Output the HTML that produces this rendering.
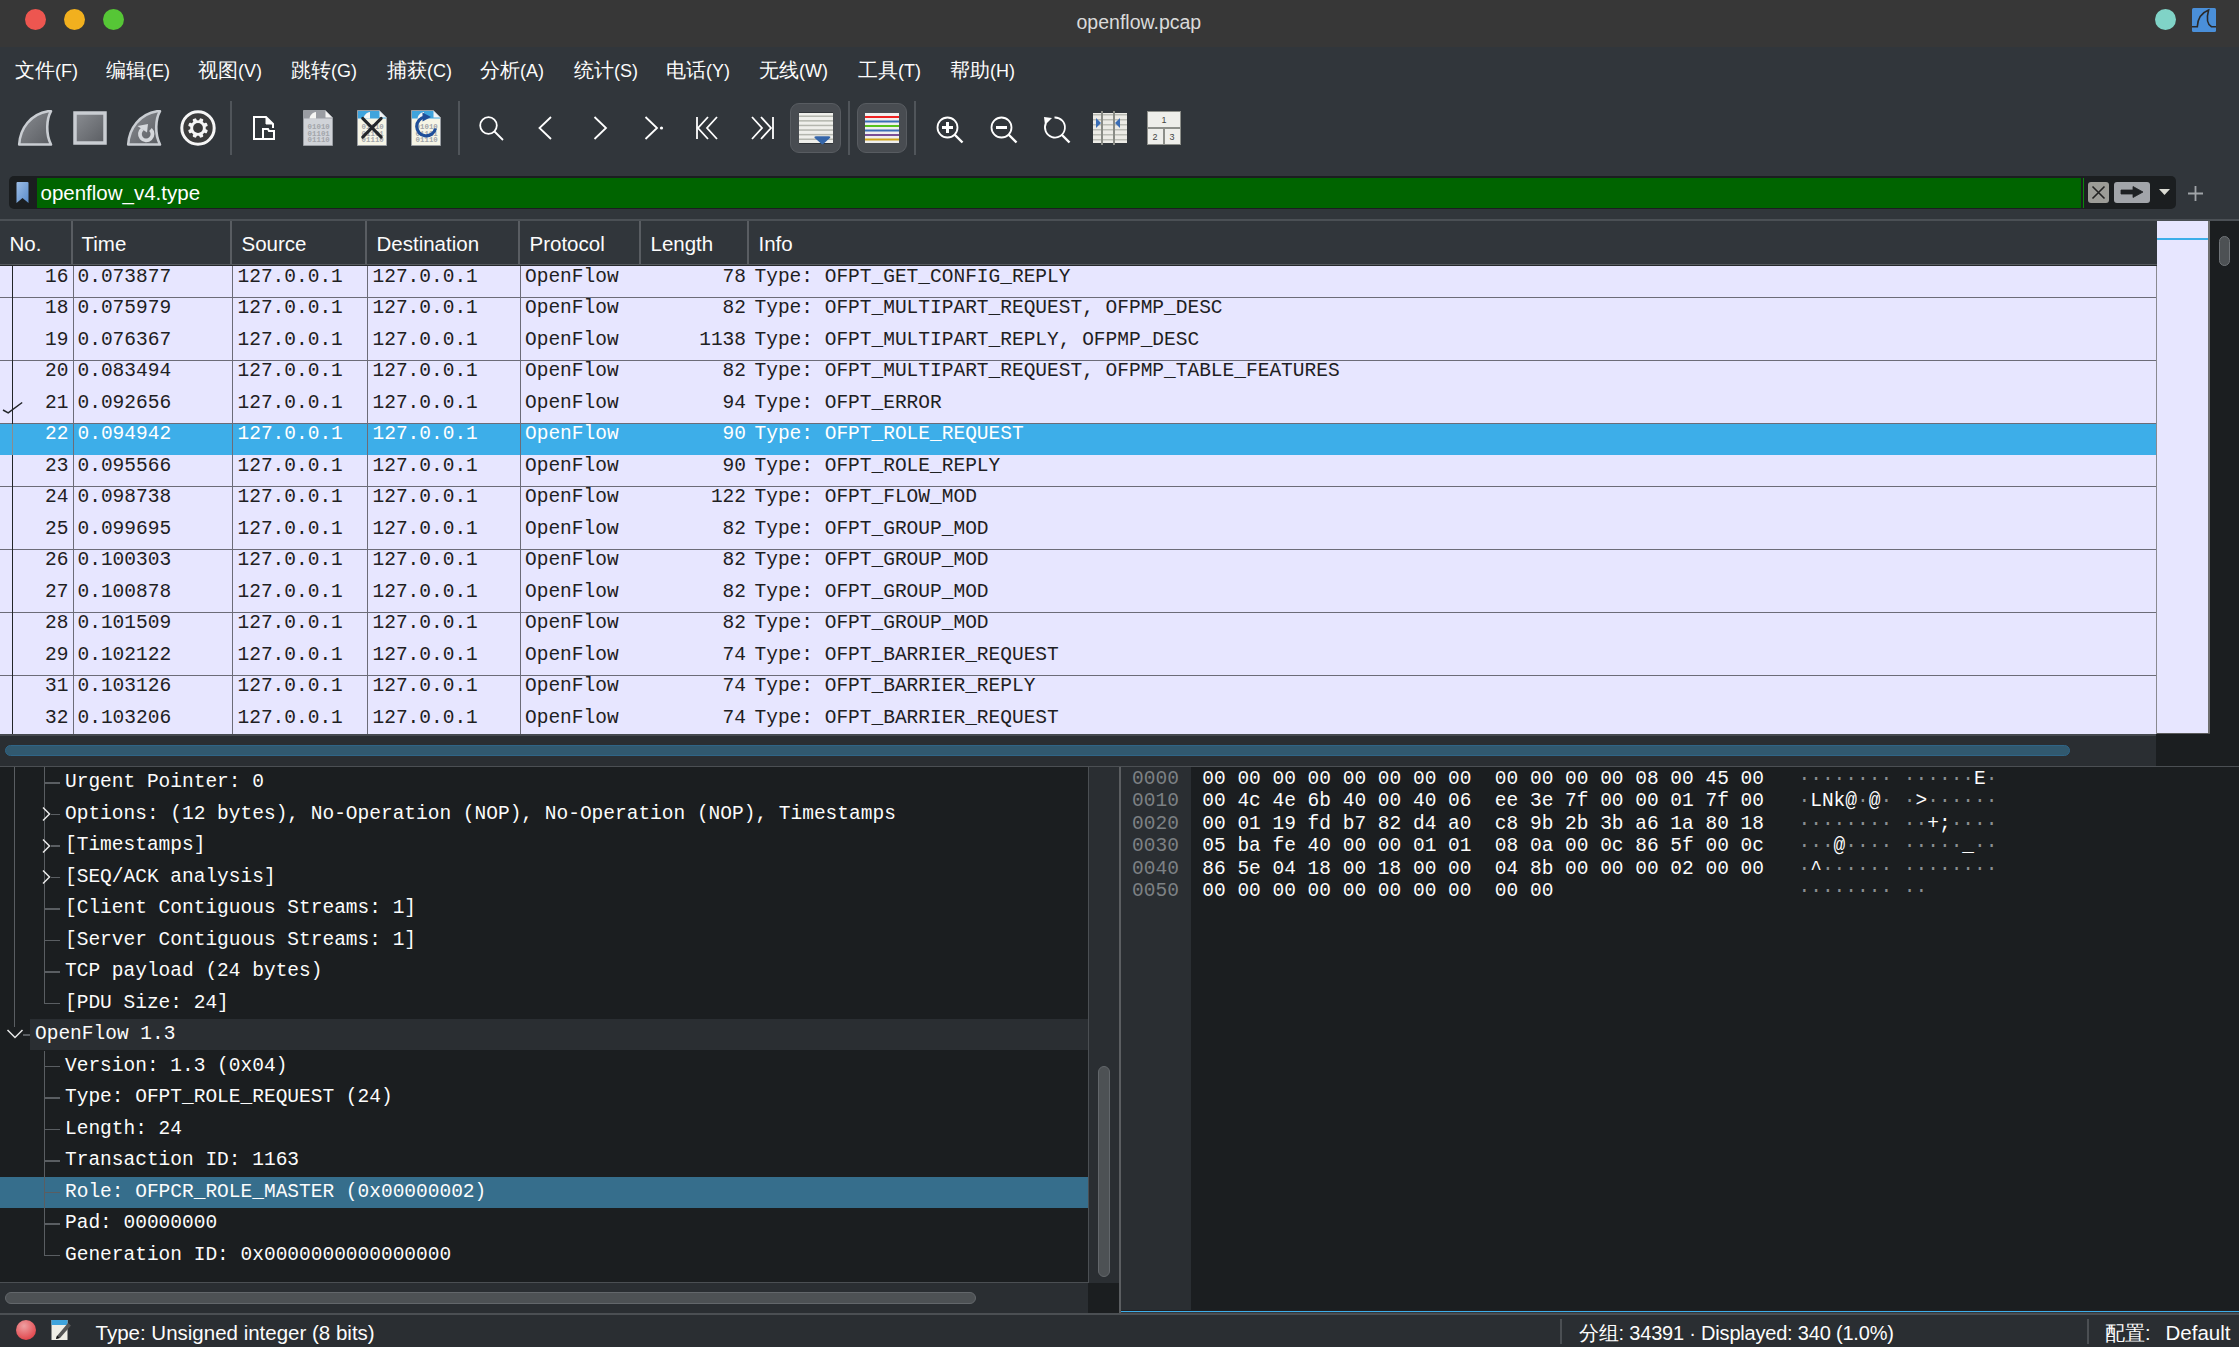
<!DOCTYPE html>
<html><head><meta charset="utf-8"><title>openflow.pcap</title>
<style>
html,body{margin:0;padding:0;width:2239px;height:1347px;overflow:hidden;background:#31363b;}
body>div,body>svg,body>div>div,body>div>svg{position:absolute;}
body{font-family:'Liberation Sans',sans-serif;}
</style></head><body>
<div style="left:0px;top:0px;width:2239px;height:47px;background:#373737;"></div>
<div style="left:25.200000000000003px;top:9.2px;width:21px;height:21px;border-radius:50%;background:#ed5650"></div>
<div style="left:64.2px;top:9.2px;width:21px;height:21px;border-radius:50%;background:#f2b01e"></div>
<div style="left:103.2px;top:9.2px;width:21px;height:21px;border-radius:50%;background:#56c636"></div>
<div style="left:1076.5px;top:10.6px;font:19.5px/22px 'Liberation Sans', sans-serif;color:#dadada;white-space:pre;">openflow.pcap</div>
<div style="left:2154.6px;top:9.4px;width:21px;height:21px;border-radius:50%;background:#80d3c7"></div>
<svg style="left:2192px;top:8px" width="24" height="24" viewBox="0 0 24 24"><rect x="0" y="0" width="24" height="24" rx="1.5" fill="#4a8fd9"/><path d="M0 18.8 H5.3 C5.6 10 9 5 16.6 2 C15 8 14.5 16 19.5 18.8 H24" fill="none" stroke="#2a2a2a" stroke-width="1.6"/></svg>
<div style="left:0px;top:47px;width:2239px;height:52px;background:#31363b;"></div>
<div style="left:15px;top:60.3px;font:20px/20px 'Liberation Sans', sans-serif;color:#fcfcfc;white-space:pre">文件<span style="font-size:18px">(F)</span></div>
<div style="left:106px;top:60.3px;font:20px/20px 'Liberation Sans', sans-serif;color:#fcfcfc;white-space:pre">编辑<span style="font-size:18px">(E)</span></div>
<div style="left:198px;top:60.3px;font:20px/20px 'Liberation Sans', sans-serif;color:#fcfcfc;white-space:pre">视图<span style="font-size:18px">(V)</span></div>
<div style="left:291px;top:60.3px;font:20px/20px 'Liberation Sans', sans-serif;color:#fcfcfc;white-space:pre">跳转<span style="font-size:18px">(G)</span></div>
<div style="left:387px;top:60.3px;font:20px/20px 'Liberation Sans', sans-serif;color:#fcfcfc;white-space:pre">捕获<span style="font-size:18px">(C)</span></div>
<div style="left:480px;top:60.3px;font:20px/20px 'Liberation Sans', sans-serif;color:#fcfcfc;white-space:pre">分析<span style="font-size:18px">(A)</span></div>
<div style="left:574px;top:60.3px;font:20px/20px 'Liberation Sans', sans-serif;color:#fcfcfc;white-space:pre">统计<span style="font-size:18px">(S)</span></div>
<div style="left:666px;top:60.3px;font:20px/20px 'Liberation Sans', sans-serif;color:#fcfcfc;white-space:pre">电话<span style="font-size:18px">(Y)</span></div>
<div style="left:759px;top:60.3px;font:20px/20px 'Liberation Sans', sans-serif;color:#fcfcfc;white-space:pre">无线<span style="font-size:18px">(W)</span></div>
<div style="left:858px;top:60.3px;font:20px/20px 'Liberation Sans', sans-serif;color:#fcfcfc;white-space:pre">工具<span style="font-size:18px">(T)</span></div>
<div style="left:950px;top:60.3px;font:20px/20px 'Liberation Sans', sans-serif;color:#fcfcfc;white-space:pre">帮助<span style="font-size:18px">(H)</span></div>
<div style="left:0px;top:99px;width:2239px;height:66px;background:#31363b;"></div>
<div style="left:790px;top:102.5px;width:51px;height:50.5px;border-radius:9px;background:#484c51;box-sizing:border-box;border:1.5px solid #585c61"></div>
<div style="left:857px;top:102.5px;width:50px;height:50.5px;border-radius:9px;background:#484c51;box-sizing:border-box;border:1.5px solid #585c61"></div>
<div style="left:230px;top:101px;width:2px;height:54px;background:#50555a;"></div>
<div style="left:458px;top:101px;width:2px;height:54px;background:#50555a;"></div>
<div style="left:848px;top:101px;width:2px;height:54px;background:#50555a;"></div>
<div style="left:914px;top:101px;width:2px;height:54px;background:#50555a;"></div>
<svg style="left:18px;top:110px;overflow:visible" width="35" height="36" viewBox="0 0 35 36"><defs><linearGradient id="gfin" x1="0" y1="0" x2="1" y2="1"><stop offset="0" stop-color="#8a8d92"/><stop offset="1" stop-color="#5a5d62"/></linearGradient></defs><path d="M1.2 34.5 C2 18 13 4 30 1.2 H33 C28.5 9 27.5 24 33 34.5 Z" fill="url(#gfin)" stroke="#c9cdd2" stroke-width="2.6" stroke-linejoin="round"/></svg>
<svg style="left:73px;top:111px;overflow:visible" width="34" height="34" viewBox="0 0 34 34"><rect x="2" y="2" width="30" height="30" fill="url(#gfin)" stroke="#c9cdd2" stroke-width="3.5"/></svg>
<svg style="left:127px;top:110px;overflow:visible" width="35" height="36" viewBox="0 0 35 36"><path d="M1.2 34.5 C2 18 13 4 30 1.2 H33 C28.5 9 27.5 24 33 34.5 Z" fill="url(#gfin)" stroke="#c9cdd2" stroke-width="2.6" stroke-linejoin="round"/><path d="M23.5 19.5 A6.3 6.3 0 1 1 15.5 19" fill="none" stroke="#d5d8dc" stroke-width="3.8"/><path d="M10.5 16 L21 14 L20 22.5 Z" fill="#d5d8dc"/></svg>
<svg style="left:180px;top:110px;overflow:visible" width="36" height="36" viewBox="0 0 36 36"><circle cx="18" cy="18" r="16.2" fill="#3c3c3c" stroke="#f6f6f6" stroke-width="3"/><g fill="#f6f6f6" transform="translate(18 18) rotate(22.5)"><rect x="-1.9" y="-10" width="3.8" height="4" rx="1" transform="rotate(0)"/><rect x="-1.9" y="-10" width="3.8" height="4" rx="1" transform="rotate(45)"/><rect x="-1.9" y="-10" width="3.8" height="4" rx="1" transform="rotate(90)"/><rect x="-1.9" y="-10" width="3.8" height="4" rx="1" transform="rotate(135)"/><rect x="-1.9" y="-10" width="3.8" height="4" rx="1" transform="rotate(180)"/><rect x="-1.9" y="-10" width="3.8" height="4" rx="1" transform="rotate(225)"/><rect x="-1.9" y="-10" width="3.8" height="4" rx="1" transform="rotate(270)"/><rect x="-1.9" y="-10" width="3.8" height="4" rx="1" transform="rotate(315)"/><circle r="7.8"/></g><circle cx="18" cy="18" r="4.9" fill="#3a3a3a"/></svg>
<svg style="left:253px;top:116px;overflow:visible" width="22" height="24" viewBox="0 0 22 24"><path d="M12 23 H1 V1 H13 L20 8 V12" fill="none" stroke="#fff" stroke-width="2"/><path d="M13 1 V8 H20" fill="#fff" stroke="#fff" stroke-width="1"/><path d="M10 13 H15 L16 15 H21 V23 H10 Z" fill="none" stroke="#fff" stroke-width="2"/></svg>
<svg style="left:303px;top:110px;overflow:visible" width="30" height="36" viewBox="0 0 30 36"><path d="M0.5 0.5 H22.5 L29.5 7.5 V35.5 H0.5 Z" fill="#d0d3d8" stroke="#9a9ea3" stroke-width="1"/><path d="M1 1 H22.3 L29 7.7 V8.6 H1 Z" fill="#9a9da3"/><path d="M22.5 1 V7.5 H29 Z" fill="#f4f4f4"/><path d="M6.5 8.6 C7 5 9.5 2.5 13 2 V8.6 Z" fill="#f6f6f4"/><text x="4.6" y="18.7" font-family="Liberation Mono" font-weight="bold" font-size="7.4" fill="#a2a5aa">01010</text><text x="4.6" y="25.5" font-family="Liberation Mono" font-weight="bold" font-size="7.4" fill="#a2a5aa">01101</text><text x="4.6" y="32.3" font-family="Liberation Mono" font-weight="bold" font-size="7.4" fill="#a2a5aa">01110</text></svg>
<svg style="left:357px;top:110px;overflow:visible" width="30" height="36" viewBox="0 0 30 36"><path d="M0.5 0.5 H22.5 L29.5 7.5 V35.5 H0.5 Z" fill="#f6f5e6" stroke="#9a9ea3" stroke-width="1"/><path d="M1 1 H22.3 L29 7.7 V8.6 H1 Z" fill="#3fa4dd"/><path d="M22.5 1 V7.5 H29 Z" fill="#f4f4f4"/><path d="M6.5 8.6 C7 5 9.5 2.5 13 2 V8.6 Z" fill="#f6f6f4"/><text x="4.6" y="18.7" font-family="Liberation Mono" font-weight="bold" font-size="7.4" fill="#a2a5aa">01010</text><text x="4.6" y="25.5" font-family="Liberation Mono" font-weight="bold" font-size="7.4" fill="#a2a5aa">01101</text><text x="4.6" y="32.3" font-family="Liberation Mono" font-weight="bold" font-size="7.4" fill="#a2a5aa">01110</text><path d="M5.7 8.4 L24.2 27.1 M24.2 8.4 L5.7 27.1" stroke="#23262a" stroke-width="3" stroke-linecap="round"/></svg>
<svg style="left:411px;top:110px;overflow:visible" width="30" height="36" viewBox="0 0 30 36"><path d="M0.5 0.5 H22.5 L29.5 7.5 V35.5 H0.5 Z" fill="#f6f5e6" stroke="#9a9ea3" stroke-width="1"/><path d="M1 1 H22.3 L29 7.7 V8.6 H1 Z" fill="#3fa4dd"/><path d="M22.5 1 V7.5 H29 Z" fill="#f4f4f4"/><path d="M6.5 8.6 C7 5 9.5 2.5 13 2 V8.6 Z" fill="#f6f6f4"/><text x="4.6" y="18.7" font-family="Liberation Mono" font-weight="bold" font-size="7.4" fill="#a2a5aa">01010</text><text x="4.6" y="25.5" font-family="Liberation Mono" font-weight="bold" font-size="7.4" fill="#a2a5aa">01101</text><text x="4.6" y="32.3" font-family="Liberation Mono" font-weight="bold" font-size="7.4" fill="#a2a5aa">01110</text><path d="M14 7 A9.5 9.5 0 1 0 24.5 18.5" fill="none" stroke="#1f4f9a" stroke-width="3.2"/><path d="M11.5 2.5 L20 7 L11.5 11.5 Z" fill="#1f4f9a"/></svg>
<svg style="left:479px;top:116px;overflow:visible" width="25" height="25" viewBox="0 0 25 25"><circle cx="9.5" cy="9.5" r="8.3" fill="none" stroke="#fff" stroke-width="1.8"/><path d="M15.5 15.5 L24 24" stroke="#fff" stroke-width="1.8"/></svg>
<svg style="left:538px;top:116px;overflow:visible" width="15" height="24" viewBox="0 0 15 24"><path d="M13 1 L1.5 12 L13 23" fill="none" stroke="#fff" stroke-width="1.8"/></svg>
<svg style="left:593px;top:116px;overflow:visible" width="15" height="24" viewBox="0 0 15 24"><path d="M1.5 1 L13 12 L1.5 23" fill="none" stroke="#fff" stroke-width="1.8"/></svg>
<svg style="left:644px;top:116px;overflow:visible" width="20" height="24" viewBox="0 0 20 24"><path d="M1.5 1 L13 12 L1.5 23" fill="none" stroke="#fff" stroke-width="1.8"/><circle cx="17.5" cy="12" r="1.6" fill="#fff"/></svg>
<svg style="left:695px;top:116px;overflow:visible" width="24" height="24" viewBox="0 0 24 24"><path d="M2 1 V23" stroke="#fff" stroke-width="1.8"/><path d="M13 1 L3 12 L13 23 M22 1 L12 12 L22 23" fill="none" stroke="#fff" stroke-width="1.8"/></svg>
<svg style="left:751px;top:116px;overflow:visible" width="24" height="24" viewBox="0 0 24 24"><path d="M22 1 V23" stroke="#fff" stroke-width="1.8"/><path d="M1 1 L11 12 L1 23 M10 1 L20 12 L10 23" fill="none" stroke="#fff" stroke-width="1.8"/></svg>
<svg style="left:799px;top:113px;overflow:visible" width="34" height="30" viewBox="0 0 34 30"><rect x="0" y="-0.6" width="34" height="31.2" fill="#25282b"/><rect x="0" y="0" width="34" height="30" fill="#efefeb"/><rect x="0" y="2.5" width="34" height="1.5" fill="#b4b6ae"/><rect x="0" y="7.1" width="34" height="1.5" fill="#b4b6ae"/><rect x="0" y="11.7" width="34" height="1.5" fill="#b4b6ae"/><rect x="0" y="16.299999999999997" width="34" height="1.5" fill="#b4b6ae"/><rect x="0" y="20.9" width="34" height="1.5" fill="#b4b6ae"/><rect x="0" y="25.5" width="34" height="1.5" fill="#b4b6ae"/><path d="M15.5 24.8 Q14.8 23.3 16.8 23.3 H30 Q32 23.3 31.2 24.8 L24.3 31 Q23.4 31.8 22.5 31 Z" fill="#3566aa"/></svg>
<svg style="left:865px;top:113px;overflow:visible" width="34" height="30" viewBox="0 0 34 30"><rect x="0" y="0" width="34" height="30" fill="#efefef"/><rect x="0" y="3.0" width="34" height="2" fill="#e22"/><rect x="0" y="7.5" width="34" height="2" fill="#3a6db5"/><rect x="0" y="12.0" width="34" height="2" fill="#55c21c"/><rect x="0" y="16.5" width="34" height="2" fill="#3a6db5"/><rect x="0" y="21.0" width="34" height="2" fill="#7a4f96"/><rect x="0" y="25.5" width="34" height="2" fill="#d0a41a"/></svg>
<svg style="left:936px;top:116px;overflow:visible" width="28" height="28" viewBox="0 0 28 28"><circle cx="11.5" cy="11.5" r="10" fill="none" stroke="#fff" stroke-width="1.8"/><path d="M18.5 18.5 L26.5 26.5" stroke="#fff" stroke-width="2.4"/><path d="M11.5 6 V17 M6 11.5 H17" stroke="#fff" stroke-width="3"/></svg>
<svg style="left:990px;top:116px;overflow:visible" width="28" height="28" viewBox="0 0 28 28"><circle cx="11.5" cy="11.5" r="10" fill="none" stroke="#fff" stroke-width="1.8"/><path d="M18.5 18.5 L26.5 26.5" stroke="#fff" stroke-width="2.4"/><path d="M6 11.5 H17" stroke="#fff" stroke-width="3"/></svg>
<svg style="left:1043px;top:116px;overflow:visible" width="28" height="28" viewBox="0 0 28 28"><path d="M3 7 A10 10 0 1 0 11.5 1.5" fill="none" stroke="#fff" stroke-width="1.8"/><path d="M1 1 L9 2 L2 9 Z" fill="#fff"/><path d="M18.5 18.5 L26.5 26.5" stroke="#fff" stroke-width="2.4"/></svg>
<svg style="left:1093px;top:111px;overflow:visible" width="34" height="34" viewBox="0 0 34 34"><rect x="0" y="2" width="34" height="30" fill="#ecebe6"/><rect x="0" y="3" width="34" height="1.5" fill="#bbbdb5"/><rect x="0" y="8" width="34" height="1.5" fill="#bbbdb5"/><rect x="0" y="13" width="34" height="1.5" fill="#bbbdb5"/><rect x="0" y="18" width="34" height="1.5" fill="#bbbdb5"/><rect x="0" y="23" width="34" height="1.5" fill="#bbbdb5"/><rect x="0" y="28" width="34" height="1.5" fill="#bbbdb5"/><rect x="8" y="0" width="2" height="34" fill="#8a8c86"/><rect x="20" y="0" width="2" height="34" fill="#8a8c86"/><path d="M3 7 L8 12 L3 17 Z" fill="#3a6db5"/><path d="M27 7 L22 12 L27 17 Z" fill="#3a6db5"/></svg>
<svg style="left:1147px;top:111px;overflow:visible" width="34" height="34" viewBox="0 0 34 34"><rect x="0" y="0" width="34" height="34" fill="#8d8f8a"/><rect x="1" y="1" width="32" height="15" fill="#eeeeea"/><rect x="1" y="18" width="15" height="15" fill="#eeeeea"/><rect x="18" y="18" width="15" height="15" fill="#eeeeea"/><text x="14.5" y="12" font-family="Liberation Sans" font-size="9" fill="#444">1</text><text x="5.5" y="29" font-family="Liberation Sans" font-size="9" fill="#444">2</text><text x="22.5" y="29" font-family="Liberation Sans" font-size="9" fill="#444">3</text></svg>
<div style="left:0px;top:165px;width:2239px;height:54px;background:#31363b;"></div>
<div style="left:9px;top:176px;width:2167px;height:32.5px;border-radius:5px;background:#1b1e20"></div>
<div style="left:36.7px;top:178px;width:2044.5px;height:29.8px;background:#006400;"></div>
<div style="left:2083px;top:178px;width:1px;height:29.8px;background:#0a8a0a;"></div>
<svg style="left:16px;top:182px;overflow:visible" width="13" height="21" viewBox="0 0 13 21"><defs><linearGradient id="gbm" x1="0" y1="0" x2="1" y2="1"><stop offset="0" stop-color="#9cbde6"/><stop offset="1" stop-color="#5a8cc9"/></linearGradient></defs><path d="M0.5 1 Q0.5 0 1.5 0 H11.5 Q12.5 0 12.5 1 V21 L6.5 16 L0.5 21 Z" fill="url(#gbm)"/></svg>
<div style="left:40.5px;top:182.3px;font:20.5px/22px 'Liberation Sans', sans-serif;color:#ffffff;white-space:pre;">openflow_v4.type</div>
<div style="left:2088px;top:182px;width:21px;height:21px;border-radius:3px;background:#9c9c97"></div>
<svg style="left:2091px;top:185px;overflow:visible" width="15" height="15" viewBox="0 0 15 15"><path d="M1.5 1.5 L13.5 13.5 M13.5 1.5 L1.5 13.5" stroke="#222" stroke-width="1.6"/></svg>
<div style="left:2114px;top:182px;width:36px;height:21px;border-radius:3px;background:#a2a5aa"></div>
<svg style="left:2120px;top:186px;overflow:visible" width="24" height="12" viewBox="0 0 24 12"><path d="M1 4 H13 V0.5 L23 6 L13 11.5 V8 H1 Z" fill="#1e2124" stroke="#1e2124" stroke-width="0.8" stroke-linejoin="round"/></svg>
<svg style="left:2159px;top:189px;overflow:visible" width="11" height="6" viewBox="0 0 11 6"><path d="M0 0 H11 L5.5 6 Z" fill="#dcdcd4"/></svg>
<svg style="left:2188px;top:185.5px;overflow:visible" width="15" height="15" viewBox="0 0 15 15"><path d="M7.5 0 V15 M0 7.5 H15" stroke="#a0a4a8" stroke-width="1.8"/></svg>
<div style="left:0px;top:219px;width:2239px;height:1.5px;background:#4b5055;"></div>
<div style="left:0px;top:220.5px;width:2157px;height:44px;background:#31363b;"></div>
<div style="left:0px;top:264px;width:2157px;height:1px;background:#565a5e;"></div>
<div style="left:0px;top:265px;width:2157px;height:1.1px;background:#26292c;"></div>
<div style="left:70.5px;top:221px;width:2px;height:43px;background:#595d62;"></div>
<div style="left:229.8px;top:221px;width:2px;height:43px;background:#595d62;"></div>
<div style="left:364.9px;top:221px;width:2px;height:43px;background:#595d62;"></div>
<div style="left:518px;top:221px;width:2px;height:43px;background:#595d62;"></div>
<div style="left:639px;top:221px;width:2px;height:43px;background:#595d62;"></div>
<div style="left:747px;top:221px;width:2px;height:43px;background:#595d62;"></div>
<div style="left:9.5px;top:233.7px;font:20.5px/20px 'Liberation Sans', sans-serif;color:#fcfcfc;white-space:pre;">No.</div>
<div style="left:81.5px;top:233.7px;font:20.5px/20px 'Liberation Sans', sans-serif;color:#fcfcfc;white-space:pre;">Time</div>
<div style="left:241.5px;top:233.7px;font:20.5px/20px 'Liberation Sans', sans-serif;color:#fcfcfc;white-space:pre;">Source</div>
<div style="left:376.5px;top:233.7px;font:20.5px/20px 'Liberation Sans', sans-serif;color:#fcfcfc;white-space:pre;">Destination</div>
<div style="left:529.5px;top:233.7px;font:20.5px/20px 'Liberation Sans', sans-serif;color:#fcfcfc;white-space:pre;">Protocol</div>
<div style="left:650.5px;top:233.7px;font:20.5px/20px 'Liberation Sans', sans-serif;color:#fcfcfc;white-space:pre;">Length</div>
<div style="left:758.5px;top:233.7px;font:20.5px/20px 'Liberation Sans', sans-serif;color:#fcfcfc;white-space:pre;">Info</div>
<div style="left:0;top:266.1px;width:2156px;height:467.9px;background:#e7e6ff;overflow:hidden">
<div style="left:0;top:0.8px;width:68.5px;text-align:right;font:19.5px/20px 'Liberation Mono', monospace;color:#1e2022">16</div>
<div style="left:77.5px;top:0.8px;font:19.5px/20px 'Liberation Mono', monospace;color:#1e2022;white-space:pre">0.073877</div>
<div style="left:237.5px;top:0.8px;font:19.5px/20px 'Liberation Mono', monospace;color:#1e2022;white-space:pre">127.0.0.1</div>
<div style="left:372.5px;top:0.8px;font:19.5px/20px 'Liberation Mono', monospace;color:#1e2022;white-space:pre">127.0.0.1</div>
<div style="left:525px;top:0.8px;font:19.5px/20px 'Liberation Mono', monospace;color:#1e2022;white-space:pre">OpenFlow</div>
<div style="left:640px;top:0.8px;width:106px;text-align:right;font:19.5px/20px 'Liberation Mono', monospace;color:#1e2022">78</div>
<div style="left:754.5px;top:0.8px;font:19.5px/20px 'Liberation Mono', monospace;color:#1e2022;white-space:pre">Type: OFPT_GET_CONFIG_REPLY</div>
<div style="left:0;top:31.0px;width:2156px;height:1px;background:#6c6c78"></div>
<div style="left:0;top:32.3px;width:68.5px;text-align:right;font:19.5px/20px 'Liberation Mono', monospace;color:#1e2022">18</div>
<div style="left:77.5px;top:32.3px;font:19.5px/20px 'Liberation Mono', monospace;color:#1e2022;white-space:pre">0.075979</div>
<div style="left:237.5px;top:32.3px;font:19.5px/20px 'Liberation Mono', monospace;color:#1e2022;white-space:pre">127.0.0.1</div>
<div style="left:372.5px;top:32.3px;font:19.5px/20px 'Liberation Mono', monospace;color:#1e2022;white-space:pre">127.0.0.1</div>
<div style="left:525px;top:32.3px;font:19.5px/20px 'Liberation Mono', monospace;color:#1e2022;white-space:pre">OpenFlow</div>
<div style="left:640px;top:32.3px;width:106px;text-align:right;font:19.5px/20px 'Liberation Mono', monospace;color:#1e2022">82</div>
<div style="left:754.5px;top:32.3px;font:19.5px/20px 'Liberation Mono', monospace;color:#1e2022;white-space:pre">Type: OFPT_MULTIPART_REQUEST, OFPMP_DESC</div>
<div style="left:0;top:63.8px;width:68.5px;text-align:right;font:19.5px/20px 'Liberation Mono', monospace;color:#1e2022">19</div>
<div style="left:77.5px;top:63.8px;font:19.5px/20px 'Liberation Mono', monospace;color:#1e2022;white-space:pre">0.076367</div>
<div style="left:237.5px;top:63.8px;font:19.5px/20px 'Liberation Mono', monospace;color:#1e2022;white-space:pre">127.0.0.1</div>
<div style="left:372.5px;top:63.8px;font:19.5px/20px 'Liberation Mono', monospace;color:#1e2022;white-space:pre">127.0.0.1</div>
<div style="left:525px;top:63.8px;font:19.5px/20px 'Liberation Mono', monospace;color:#1e2022;white-space:pre">OpenFlow</div>
<div style="left:640px;top:63.8px;width:106px;text-align:right;font:19.5px/20px 'Liberation Mono', monospace;color:#1e2022">1138</div>
<div style="left:754.5px;top:63.8px;font:19.5px/20px 'Liberation Mono', monospace;color:#1e2022;white-space:pre">Type: OFPT_MULTIPART_REPLY, OFPMP_DESC</div>
<div style="left:0;top:94.0px;width:2156px;height:1px;background:#6c6c78"></div>
<div style="left:0;top:95.3px;width:68.5px;text-align:right;font:19.5px/20px 'Liberation Mono', monospace;color:#1e2022">20</div>
<div style="left:77.5px;top:95.3px;font:19.5px/20px 'Liberation Mono', monospace;color:#1e2022;white-space:pre">0.083494</div>
<div style="left:237.5px;top:95.3px;font:19.5px/20px 'Liberation Mono', monospace;color:#1e2022;white-space:pre">127.0.0.1</div>
<div style="left:372.5px;top:95.3px;font:19.5px/20px 'Liberation Mono', monospace;color:#1e2022;white-space:pre">127.0.0.1</div>
<div style="left:525px;top:95.3px;font:19.5px/20px 'Liberation Mono', monospace;color:#1e2022;white-space:pre">OpenFlow</div>
<div style="left:640px;top:95.3px;width:106px;text-align:right;font:19.5px/20px 'Liberation Mono', monospace;color:#1e2022">82</div>
<div style="left:754.5px;top:95.3px;font:19.5px/20px 'Liberation Mono', monospace;color:#1e2022;white-space:pre">Type: OFPT_MULTIPART_REQUEST, OFPMP_TABLE_FEATURES</div>
<div style="left:0;top:126.8px;width:68.5px;text-align:right;font:19.5px/20px 'Liberation Mono', monospace;color:#1e2022">21</div>
<div style="left:77.5px;top:126.8px;font:19.5px/20px 'Liberation Mono', monospace;color:#1e2022;white-space:pre">0.092656</div>
<div style="left:237.5px;top:126.8px;font:19.5px/20px 'Liberation Mono', monospace;color:#1e2022;white-space:pre">127.0.0.1</div>
<div style="left:372.5px;top:126.8px;font:19.5px/20px 'Liberation Mono', monospace;color:#1e2022;white-space:pre">127.0.0.1</div>
<div style="left:525px;top:126.8px;font:19.5px/20px 'Liberation Mono', monospace;color:#1e2022;white-space:pre">OpenFlow</div>
<div style="left:640px;top:126.8px;width:106px;text-align:right;font:19.5px/20px 'Liberation Mono', monospace;color:#1e2022">94</div>
<div style="left:754.5px;top:126.8px;font:19.5px/20px 'Liberation Mono', monospace;color:#1e2022;white-space:pre">Type: OFPT_ERROR</div>
<div style="left:0;top:157.5px;width:2156px;height:31.5px;background:#3daee9"></div>
<div style="left:0;top:157.0px;width:2156px;height:1px;background:#6c6c78"></div>
<div style="left:0;top:158.3px;width:68.5px;text-align:right;font:19.5px/20px 'Liberation Mono', monospace;color:#ffffff">22</div>
<div style="left:77.5px;top:158.3px;font:19.5px/20px 'Liberation Mono', monospace;color:#ffffff;white-space:pre">0.094942</div>
<div style="left:237.5px;top:158.3px;font:19.5px/20px 'Liberation Mono', monospace;color:#ffffff;white-space:pre">127.0.0.1</div>
<div style="left:372.5px;top:158.3px;font:19.5px/20px 'Liberation Mono', monospace;color:#ffffff;white-space:pre">127.0.0.1</div>
<div style="left:525px;top:158.3px;font:19.5px/20px 'Liberation Mono', monospace;color:#ffffff;white-space:pre">OpenFlow</div>
<div style="left:640px;top:158.3px;width:106px;text-align:right;font:19.5px/20px 'Liberation Mono', monospace;color:#ffffff">90</div>
<div style="left:754.5px;top:158.3px;font:19.5px/20px 'Liberation Mono', monospace;color:#ffffff;white-space:pre">Type: OFPT_ROLE_REQUEST</div>
<div style="left:0;top:189.8px;width:68.5px;text-align:right;font:19.5px/20px 'Liberation Mono', monospace;color:#1e2022">23</div>
<div style="left:77.5px;top:189.8px;font:19.5px/20px 'Liberation Mono', monospace;color:#1e2022;white-space:pre">0.095566</div>
<div style="left:237.5px;top:189.8px;font:19.5px/20px 'Liberation Mono', monospace;color:#1e2022;white-space:pre">127.0.0.1</div>
<div style="left:372.5px;top:189.8px;font:19.5px/20px 'Liberation Mono', monospace;color:#1e2022;white-space:pre">127.0.0.1</div>
<div style="left:525px;top:189.8px;font:19.5px/20px 'Liberation Mono', monospace;color:#1e2022;white-space:pre">OpenFlow</div>
<div style="left:640px;top:189.8px;width:106px;text-align:right;font:19.5px/20px 'Liberation Mono', monospace;color:#1e2022">90</div>
<div style="left:754.5px;top:189.8px;font:19.5px/20px 'Liberation Mono', monospace;color:#1e2022;white-space:pre">Type: OFPT_ROLE_REPLY</div>
<div style="left:0;top:220.0px;width:2156px;height:1px;background:#6c6c78"></div>
<div style="left:0;top:221.3px;width:68.5px;text-align:right;font:19.5px/20px 'Liberation Mono', monospace;color:#1e2022">24</div>
<div style="left:77.5px;top:221.3px;font:19.5px/20px 'Liberation Mono', monospace;color:#1e2022;white-space:pre">0.098738</div>
<div style="left:237.5px;top:221.3px;font:19.5px/20px 'Liberation Mono', monospace;color:#1e2022;white-space:pre">127.0.0.1</div>
<div style="left:372.5px;top:221.3px;font:19.5px/20px 'Liberation Mono', monospace;color:#1e2022;white-space:pre">127.0.0.1</div>
<div style="left:525px;top:221.3px;font:19.5px/20px 'Liberation Mono', monospace;color:#1e2022;white-space:pre">OpenFlow</div>
<div style="left:640px;top:221.3px;width:106px;text-align:right;font:19.5px/20px 'Liberation Mono', monospace;color:#1e2022">122</div>
<div style="left:754.5px;top:221.3px;font:19.5px/20px 'Liberation Mono', monospace;color:#1e2022;white-space:pre">Type: OFPT_FLOW_MOD</div>
<div style="left:0;top:252.8px;width:68.5px;text-align:right;font:19.5px/20px 'Liberation Mono', monospace;color:#1e2022">25</div>
<div style="left:77.5px;top:252.8px;font:19.5px/20px 'Liberation Mono', monospace;color:#1e2022;white-space:pre">0.099695</div>
<div style="left:237.5px;top:252.8px;font:19.5px/20px 'Liberation Mono', monospace;color:#1e2022;white-space:pre">127.0.0.1</div>
<div style="left:372.5px;top:252.8px;font:19.5px/20px 'Liberation Mono', monospace;color:#1e2022;white-space:pre">127.0.0.1</div>
<div style="left:525px;top:252.8px;font:19.5px/20px 'Liberation Mono', monospace;color:#1e2022;white-space:pre">OpenFlow</div>
<div style="left:640px;top:252.8px;width:106px;text-align:right;font:19.5px/20px 'Liberation Mono', monospace;color:#1e2022">82</div>
<div style="left:754.5px;top:252.8px;font:19.5px/20px 'Liberation Mono', monospace;color:#1e2022;white-space:pre">Type: OFPT_GROUP_MOD</div>
<div style="left:0;top:283.0px;width:2156px;height:1px;background:#6c6c78"></div>
<div style="left:0;top:284.3px;width:68.5px;text-align:right;font:19.5px/20px 'Liberation Mono', monospace;color:#1e2022">26</div>
<div style="left:77.5px;top:284.3px;font:19.5px/20px 'Liberation Mono', monospace;color:#1e2022;white-space:pre">0.100303</div>
<div style="left:237.5px;top:284.3px;font:19.5px/20px 'Liberation Mono', monospace;color:#1e2022;white-space:pre">127.0.0.1</div>
<div style="left:372.5px;top:284.3px;font:19.5px/20px 'Liberation Mono', monospace;color:#1e2022;white-space:pre">127.0.0.1</div>
<div style="left:525px;top:284.3px;font:19.5px/20px 'Liberation Mono', monospace;color:#1e2022;white-space:pre">OpenFlow</div>
<div style="left:640px;top:284.3px;width:106px;text-align:right;font:19.5px/20px 'Liberation Mono', monospace;color:#1e2022">82</div>
<div style="left:754.5px;top:284.3px;font:19.5px/20px 'Liberation Mono', monospace;color:#1e2022;white-space:pre">Type: OFPT_GROUP_MOD</div>
<div style="left:0;top:315.8px;width:68.5px;text-align:right;font:19.5px/20px 'Liberation Mono', monospace;color:#1e2022">27</div>
<div style="left:77.5px;top:315.8px;font:19.5px/20px 'Liberation Mono', monospace;color:#1e2022;white-space:pre">0.100878</div>
<div style="left:237.5px;top:315.8px;font:19.5px/20px 'Liberation Mono', monospace;color:#1e2022;white-space:pre">127.0.0.1</div>
<div style="left:372.5px;top:315.8px;font:19.5px/20px 'Liberation Mono', monospace;color:#1e2022;white-space:pre">127.0.0.1</div>
<div style="left:525px;top:315.8px;font:19.5px/20px 'Liberation Mono', monospace;color:#1e2022;white-space:pre">OpenFlow</div>
<div style="left:640px;top:315.8px;width:106px;text-align:right;font:19.5px/20px 'Liberation Mono', monospace;color:#1e2022">82</div>
<div style="left:754.5px;top:315.8px;font:19.5px/20px 'Liberation Mono', monospace;color:#1e2022;white-space:pre">Type: OFPT_GROUP_MOD</div>
<div style="left:0;top:346.0px;width:2156px;height:1px;background:#6c6c78"></div>
<div style="left:0;top:347.3px;width:68.5px;text-align:right;font:19.5px/20px 'Liberation Mono', monospace;color:#1e2022">28</div>
<div style="left:77.5px;top:347.3px;font:19.5px/20px 'Liberation Mono', monospace;color:#1e2022;white-space:pre">0.101509</div>
<div style="left:237.5px;top:347.3px;font:19.5px/20px 'Liberation Mono', monospace;color:#1e2022;white-space:pre">127.0.0.1</div>
<div style="left:372.5px;top:347.3px;font:19.5px/20px 'Liberation Mono', monospace;color:#1e2022;white-space:pre">127.0.0.1</div>
<div style="left:525px;top:347.3px;font:19.5px/20px 'Liberation Mono', monospace;color:#1e2022;white-space:pre">OpenFlow</div>
<div style="left:640px;top:347.3px;width:106px;text-align:right;font:19.5px/20px 'Liberation Mono', monospace;color:#1e2022">82</div>
<div style="left:754.5px;top:347.3px;font:19.5px/20px 'Liberation Mono', monospace;color:#1e2022;white-space:pre">Type: OFPT_GROUP_MOD</div>
<div style="left:0;top:378.8px;width:68.5px;text-align:right;font:19.5px/20px 'Liberation Mono', monospace;color:#1e2022">29</div>
<div style="left:77.5px;top:378.8px;font:19.5px/20px 'Liberation Mono', monospace;color:#1e2022;white-space:pre">0.102122</div>
<div style="left:237.5px;top:378.8px;font:19.5px/20px 'Liberation Mono', monospace;color:#1e2022;white-space:pre">127.0.0.1</div>
<div style="left:372.5px;top:378.8px;font:19.5px/20px 'Liberation Mono', monospace;color:#1e2022;white-space:pre">127.0.0.1</div>
<div style="left:525px;top:378.8px;font:19.5px/20px 'Liberation Mono', monospace;color:#1e2022;white-space:pre">OpenFlow</div>
<div style="left:640px;top:378.8px;width:106px;text-align:right;font:19.5px/20px 'Liberation Mono', monospace;color:#1e2022">74</div>
<div style="left:754.5px;top:378.8px;font:19.5px/20px 'Liberation Mono', monospace;color:#1e2022;white-space:pre">Type: OFPT_BARRIER_REQUEST</div>
<div style="left:0;top:409.0px;width:2156px;height:1px;background:#6c6c78"></div>
<div style="left:0;top:410.3px;width:68.5px;text-align:right;font:19.5px/20px 'Liberation Mono', monospace;color:#1e2022">31</div>
<div style="left:77.5px;top:410.3px;font:19.5px/20px 'Liberation Mono', monospace;color:#1e2022;white-space:pre">0.103126</div>
<div style="left:237.5px;top:410.3px;font:19.5px/20px 'Liberation Mono', monospace;color:#1e2022;white-space:pre">127.0.0.1</div>
<div style="left:372.5px;top:410.3px;font:19.5px/20px 'Liberation Mono', monospace;color:#1e2022;white-space:pre">127.0.0.1</div>
<div style="left:525px;top:410.3px;font:19.5px/20px 'Liberation Mono', monospace;color:#1e2022;white-space:pre">OpenFlow</div>
<div style="left:640px;top:410.3px;width:106px;text-align:right;font:19.5px/20px 'Liberation Mono', monospace;color:#1e2022">74</div>
<div style="left:754.5px;top:410.3px;font:19.5px/20px 'Liberation Mono', monospace;color:#1e2022;white-space:pre">Type: OFPT_BARRIER_REPLY</div>
<div style="left:0;top:441.8px;width:68.5px;text-align:right;font:19.5px/20px 'Liberation Mono', monospace;color:#1e2022">32</div>
<div style="left:77.5px;top:441.8px;font:19.5px/20px 'Liberation Mono', monospace;color:#1e2022;white-space:pre">0.103206</div>
<div style="left:237.5px;top:441.8px;font:19.5px/20px 'Liberation Mono', monospace;color:#1e2022;white-space:pre">127.0.0.1</div>
<div style="left:372.5px;top:441.8px;font:19.5px/20px 'Liberation Mono', monospace;color:#1e2022;white-space:pre">127.0.0.1</div>
<div style="left:525px;top:441.8px;font:19.5px/20px 'Liberation Mono', monospace;color:#1e2022;white-space:pre">OpenFlow</div>
<div style="left:640px;top:441.8px;width:106px;text-align:right;font:19.5px/20px 'Liberation Mono', monospace;color:#1e2022">74</div>
<div style="left:754.5px;top:441.8px;font:19.5px/20px 'Liberation Mono', monospace;color:#1e2022;white-space:pre">Type: OFPT_BARRIER_REQUEST</div>
<div style="left:73px;top:0;width:1px;height:500px;background:#6c6c78"></div>
<div style="left:232px;top:0;width:1px;height:500px;background:#6c6c78"></div>
<div style="left:367px;top:0;width:1px;height:500px;background:#6c6c78"></div>
<div style="left:520px;top:0;width:1px;height:500px;background:#6c6c78"></div>
<div style="left:12px;top:0;width:1.3px;height:500px;background:#232629"></div>
<svg style="left:2px;top:135.4px" width="22" height="14" viewBox="0 0 22 14"><path d="M1 9 L6.2 11.9 L20.2 1.5" fill="none" stroke="#232629" stroke-width="1.5"/></svg>
<div style="left:12px;top:157.5px;width:1.3px;height:31.5px;background:#8a8c8e"></div>
</div>
<div style="left:2156px;top:266.1px;width:1px;height:467.9px;background:#8a8a90;"></div>
<div style="left:2157px;top:220.5px;width:52px;height:513.5px;background:#e7e6ff;"></div>
<div style="left:2157px;top:238.3px;width:51px;height:2px;background:#3daee9;"></div>
<div style="left:2208px;top:220.5px;width:2px;height:513.5px;background:#6f6f6f;"></div>
<div style="left:2157px;top:733px;width:53px;height:1px;background:#5a5a5a;"></div>
<div style="left:2210px;top:220.5px;width:29px;height:546px;background:#1b1e20;"></div>
<div style="left:2218.7px;top:236px;width:11.5px;height:29.7px;border-radius:6px;background:#4d5154;box-sizing:border-box;border:1px solid #707478"></div>
<div style="left:0px;top:734px;width:2156px;height:2px;background:#45494e;"></div>
<div style="left:0px;top:736px;width:2156px;height:30.5px;background:#2a2e32;"></div>
<div style="left:2156px;top:734px;width:54px;height:32.5px;background:#1b1e20;"></div>
<div style="left:4.7px;top:744.8px;width:2065.5px;height:11.4px;border-radius:6px;background:#31596f;box-sizing:border-box;border:1px solid #2f6587"></div>
<div style="left:0px;top:766.3px;width:2239px;height:1px;background:#4b4f53;"></div>
<div style="left:0px;top:767px;width:1088px;height:515.5px;background:#1b1e20;"></div>
<div style="left:1088px;top:767px;width:1px;height:515.5px;background:#4b4f53;"></div>
<div style="left:30px;top:1018.7px;width:1058px;height:31.5px;background:#2a2e32;"></div>
<div style="left:0px;top:1176.5px;width:1088px;height:31.5px;background:#366e8c;"></div>
<div style="left:13.5px;top:767px;width:1.5px;height:260.0px;background:#5a5e62;"></div>
<div style="left:43.5px;top:767px;width:1.5px;height:236.25px;background:#5a5e62;"></div>
<div style="left:43.5px;top:1050.5px;width:1.5px;height:204.75px;background:#5a5e62;"></div>
<div style="left:44px;top:782.0px;width:16px;height:1.5px;background:#5a5e62;"></div>
<div style="left:65px;top:772.4px;font:19.5px/20px 'Liberation Mono', monospace;color:#fcfcfc;white-space:pre;">Urgent Pointer: 0</div>
<svg style="left:40px;top:806.25px" width="12" height="16" viewBox="0 0 12 16"><path d="M3 1.5 L9.5 8 L3 14.5" fill="none" stroke="#e8e8e8" stroke-width="1.5"/></svg>
<div style="left:51px;top:813.5px;width:9px;height:1.5px;background:#5a5e62;"></div>
<div style="left:65px;top:803.9px;font:19.5px/20px 'Liberation Mono', monospace;color:#fcfcfc;white-space:pre;">Options: (12 bytes), No-Operation (NOP), No-Operation (NOP), Timestamps</div>
<svg style="left:40px;top:837.75px" width="12" height="16" viewBox="0 0 12 16"><path d="M3 1.5 L9.5 8 L3 14.5" fill="none" stroke="#e8e8e8" stroke-width="1.5"/></svg>
<div style="left:51px;top:845.0px;width:9px;height:1.5px;background:#5a5e62;"></div>
<div style="left:65px;top:835.4px;font:19.5px/20px 'Liberation Mono', monospace;color:#fcfcfc;white-space:pre;">[Timestamps]</div>
<svg style="left:40px;top:869.25px" width="12" height="16" viewBox="0 0 12 16"><path d="M3 1.5 L9.5 8 L3 14.5" fill="none" stroke="#e8e8e8" stroke-width="1.5"/></svg>
<div style="left:51px;top:876.5px;width:9px;height:1.5px;background:#5a5e62;"></div>
<div style="left:65px;top:866.9px;font:19.5px/20px 'Liberation Mono', monospace;color:#fcfcfc;white-space:pre;">[SEQ/ACK analysis]</div>
<div style="left:44px;top:908.0px;width:16px;height:1.5px;background:#5a5e62;"></div>
<div style="left:65px;top:898.4px;font:19.5px/20px 'Liberation Mono', monospace;color:#fcfcfc;white-space:pre;">[Client Contiguous Streams: 1]</div>
<div style="left:44px;top:939.5px;width:16px;height:1.5px;background:#5a5e62;"></div>
<div style="left:65px;top:929.9px;font:19.5px/20px 'Liberation Mono', monospace;color:#fcfcfc;white-space:pre;">[Server Contiguous Streams: 1]</div>
<div style="left:44px;top:971.0px;width:16px;height:1.5px;background:#5a5e62;"></div>
<div style="left:65px;top:961.4px;font:19.5px/20px 'Liberation Mono', monospace;color:#fcfcfc;white-space:pre;">TCP payload (24 bytes)</div>
<div style="left:44px;top:1002.5px;width:16px;height:1.5px;background:#5a5e62;"></div>
<div style="left:65px;top:992.9px;font:19.5px/20px 'Liberation Mono', monospace;color:#fcfcfc;white-space:pre;">[PDU Size: 24]</div>
<svg style="left:6px;top:1027.75px" width="18" height="12" viewBox="0 0 18 12"><path d="M1.5 2 L9 9.5 L16.5 2" fill="none" stroke="#e8e8e8" stroke-width="1.5"/></svg>
<div style="left:23px;top:1034.0px;width:7px;height:1.5px;background:#5a5e62;"></div>
<div style="left:35px;top:1024.4px;font:19.5px/20px 'Liberation Mono', monospace;color:#fcfcfc;white-space:pre;">OpenFlow 1.3</div>
<div style="left:44px;top:1065.5px;width:16px;height:1.5px;background:#5a5e62;"></div>
<div style="left:65px;top:1055.9px;font:19.5px/20px 'Liberation Mono', monospace;color:#fcfcfc;white-space:pre;">Version: 1.3 (0x04)</div>
<div style="left:44px;top:1097.0px;width:16px;height:1.5px;background:#5a5e62;"></div>
<div style="left:65px;top:1087.4px;font:19.5px/20px 'Liberation Mono', monospace;color:#fcfcfc;white-space:pre;">Type: OFPT_ROLE_REQUEST (24)</div>
<div style="left:44px;top:1128.5px;width:16px;height:1.5px;background:#5a5e62;"></div>
<div style="left:65px;top:1118.9px;font:19.5px/20px 'Liberation Mono', monospace;color:#fcfcfc;white-space:pre;">Length: 24</div>
<div style="left:44px;top:1160.0px;width:16px;height:1.5px;background:#5a5e62;"></div>
<div style="left:65px;top:1150.4px;font:19.5px/20px 'Liberation Mono', monospace;color:#fcfcfc;white-space:pre;">Transaction ID: 1163</div>
<div style="left:44px;top:1191.5px;width:16px;height:1.5px;background:#5a5e62;"></div>
<div style="left:65px;top:1181.9px;font:19.5px/20px 'Liberation Mono', monospace;color:#fcfcfc;white-space:pre;">Role: OFPCR_ROLE_MASTER (0x00000002)</div>
<div style="left:44px;top:1223.0px;width:16px;height:1.5px;background:#5a5e62;"></div>
<div style="left:65px;top:1213.4px;font:19.5px/20px 'Liberation Mono', monospace;color:#fcfcfc;white-space:pre;">Pad: 00000000</div>
<div style="left:44px;top:1254.5px;width:16px;height:1.5px;background:#5a5e62;"></div>
<div style="left:65px;top:1244.9px;font:19.5px/20px 'Liberation Mono', monospace;color:#fcfcfc;white-space:pre;">Generation ID: 0x0000000000000000</div>
<div style="left:0px;top:1282px;width:1088px;height:1px;background:#4b4f53;"></div>
<div style="left:0px;top:1283px;width:1088px;height:30px;background:#2a2e32;"></div>
<div style="left:5px;top:1292px;width:971px;height:11.5px;border-radius:6px;background:#4d5154;box-sizing:border-box;border:1px solid #63676b"></div>
<div style="left:1089px;top:767px;width:30px;height:515.5px;background:#2a2e32;"></div>
<div style="left:1098px;top:1065.7px;width:12px;height:211.3px;border-radius:6px;background:#4d5154;box-sizing:border-box;border:1px solid #63676b"></div>
<div style="left:1088px;top:1282.5px;width:31px;height:31px;background:#1b1e20;"></div>
<div style="left:1119px;top:767px;width:2px;height:546px;background:#5b5e61;"></div>
<div style="left:1121px;top:767px;width:1118px;height:544px;background:#1b1e20;"></div>
<div style="left:1121px;top:767px;width:70px;height:544px;background:#2a2e32;"></div>
<div style="left:1121px;top:1310px;width:1118px;height:1px;background:#231f20;"></div>
<div style="left:1121px;top:1311px;width:1118px;height:1.3px;background:#3daee9;"></div>
<div style="left:1132.1px;top:768.7px;font:19.5px/20px 'Liberation Mono', monospace;color:#7d8184;white-space:pre;">0000</div>
<div style="left:1202.3px;top:768.7px;font:19.5px/20px 'Liberation Mono', monospace;color:#fcfcfc;white-space:pre;">00 00 00 00 00 00 00 00  00 00 00 00 08 00 45 00</div>
<div style="left:1798.5px;top:768.7px;font:19.5px/20px 'Liberation Mono', monospace;color:#fcfcfc;white-space:pre"><span style="color:#8a8e91">·</span><span style="color:#8a8e91">·</span><span style="color:#8a8e91">·</span><span style="color:#8a8e91">·</span><span style="color:#8a8e91">·</span><span style="color:#8a8e91">·</span><span style="color:#8a8e91">·</span><span style="color:#8a8e91">·</span> <span style="color:#8a8e91">·</span><span style="color:#8a8e91">·</span><span style="color:#8a8e91">·</span><span style="color:#8a8e91">·</span><span style="color:#8a8e91">·</span><span style="color:#8a8e91">·</span>E<span style="color:#8a8e91">·</span></div>
<div style="left:1132.1px;top:791.2px;font:19.5px/20px 'Liberation Mono', monospace;color:#7d8184;white-space:pre;">0010</div>
<div style="left:1202.3px;top:791.2px;font:19.5px/20px 'Liberation Mono', monospace;color:#fcfcfc;white-space:pre;">00 4c 4e 6b 40 00 40 06  ee 3e 7f 00 00 01 7f 00</div>
<div style="left:1798.5px;top:791.2px;font:19.5px/20px 'Liberation Mono', monospace;color:#fcfcfc;white-space:pre"><span style="color:#8a8e91">·</span>LNk@<span style="color:#8a8e91">·</span>@<span style="color:#8a8e91">·</span> <span style="color:#8a8e91">·</span>&gt;<span style="color:#8a8e91">·</span><span style="color:#8a8e91">·</span><span style="color:#8a8e91">·</span><span style="color:#8a8e91">·</span><span style="color:#8a8e91">·</span><span style="color:#8a8e91">·</span></div>
<div style="left:1132.1px;top:813.7px;font:19.5px/20px 'Liberation Mono', monospace;color:#7d8184;white-space:pre;">0020</div>
<div style="left:1202.3px;top:813.7px;font:19.5px/20px 'Liberation Mono', monospace;color:#fcfcfc;white-space:pre;">00 01 19 fd b7 82 d4 a0  c8 9b 2b 3b a6 1a 80 18</div>
<div style="left:1798.5px;top:813.7px;font:19.5px/20px 'Liberation Mono', monospace;color:#fcfcfc;white-space:pre"><span style="color:#8a8e91">·</span><span style="color:#8a8e91">·</span><span style="color:#8a8e91">·</span><span style="color:#8a8e91">·</span><span style="color:#8a8e91">·</span><span style="color:#8a8e91">·</span><span style="color:#8a8e91">·</span><span style="color:#8a8e91">·</span> <span style="color:#8a8e91">·</span><span style="color:#8a8e91">·</span>+;<span style="color:#8a8e91">·</span><span style="color:#8a8e91">·</span><span style="color:#8a8e91">·</span><span style="color:#8a8e91">·</span></div>
<div style="left:1132.1px;top:836.2px;font:19.5px/20px 'Liberation Mono', monospace;color:#7d8184;white-space:pre;">0030</div>
<div style="left:1202.3px;top:836.2px;font:19.5px/20px 'Liberation Mono', monospace;color:#fcfcfc;white-space:pre;">05 ba fe 40 00 00 01 01  08 0a 00 0c 86 5f 00 0c</div>
<div style="left:1798.5px;top:836.2px;font:19.5px/20px 'Liberation Mono', monospace;color:#fcfcfc;white-space:pre"><span style="color:#8a8e91">·</span><span style="color:#8a8e91">·</span><span style="color:#8a8e91">·</span>@<span style="color:#8a8e91">·</span><span style="color:#8a8e91">·</span><span style="color:#8a8e91">·</span><span style="color:#8a8e91">·</span> <span style="color:#8a8e91">·</span><span style="color:#8a8e91">·</span><span style="color:#8a8e91">·</span><span style="color:#8a8e91">·</span><span style="color:#8a8e91">·</span>_<span style="color:#8a8e91">·</span><span style="color:#8a8e91">·</span></div>
<div style="left:1132.1px;top:858.7px;font:19.5px/20px 'Liberation Mono', monospace;color:#7d8184;white-space:pre;">0040</div>
<div style="left:1202.3px;top:858.7px;font:19.5px/20px 'Liberation Mono', monospace;color:#fcfcfc;white-space:pre;">86 5e 04 18 00 18 00 00  04 8b 00 00 00 02 00 00</div>
<div style="left:1798.5px;top:858.7px;font:19.5px/20px 'Liberation Mono', monospace;color:#fcfcfc;white-space:pre"><span style="color:#8a8e91">·</span>^<span style="color:#8a8e91">·</span><span style="color:#8a8e91">·</span><span style="color:#8a8e91">·</span><span style="color:#8a8e91">·</span><span style="color:#8a8e91">·</span><span style="color:#8a8e91">·</span> <span style="color:#8a8e91">·</span><span style="color:#8a8e91">·</span><span style="color:#8a8e91">·</span><span style="color:#8a8e91">·</span><span style="color:#8a8e91">·</span><span style="color:#8a8e91">·</span><span style="color:#8a8e91">·</span><span style="color:#8a8e91">·</span></div>
<div style="left:1132.1px;top:881.2px;font:19.5px/20px 'Liberation Mono', monospace;color:#7d8184;white-space:pre;">0050</div>
<div style="left:1202.3px;top:881.2px;font:19.5px/20px 'Liberation Mono', monospace;color:#fcfcfc;white-space:pre;">00 00 00 00 00 00 00 00  00 00</div>
<div style="left:1798.5px;top:881.2px;font:19.5px/20px 'Liberation Mono', monospace;color:#fcfcfc;white-space:pre"><span style="color:#8a8e91">·</span><span style="color:#8a8e91">·</span><span style="color:#8a8e91">·</span><span style="color:#8a8e91">·</span><span style="color:#8a8e91">·</span><span style="color:#8a8e91">·</span><span style="color:#8a8e91">·</span><span style="color:#8a8e91">·</span> <span style="color:#8a8e91">·</span><span style="color:#8a8e91">·</span></div>
<div style="left:0px;top:1313px;width:2239px;height:2px;background:#4b4f53;"></div>
<div style="left:0px;top:1315px;width:2239px;height:32px;background:#2a2e32;"></div>
<div style="left:15.5px;top:1319.5px;width:20px;height:20px;border-radius:50%;background:radial-gradient(circle at 40% 30%,#eea0a2,#e2484e 75%)"></div>
<svg style="left:51px;top:1319px;overflow:visible" width="21" height="21" viewBox="0 0 21 21"><rect x="0.5" y="1" width="16" height="20" fill="#efeee6"/><rect x="0.5" y="1" width="16" height="5" fill="#3fa4dd"/><path d="M6 17 L17 4 L20 6.5 L9 19 L5 20 Z" fill="#555"/><path d="M5 20 L6 16.5 L8.5 19 Z" fill="#111"/></svg>
<div style="left:95.5px;top:1321.5px;font:20.5px/22px 'Liberation Sans', sans-serif;color:#fcfcfc;white-space:pre;">Type: Unsigned integer (8 bits)</div>
<div style="left:1560px;top:1319px;width:2px;height:25px;background:#4b4f53;"></div>
<div style="left:2087px;top:1319px;width:2px;height:25px;background:#4b4f53;"></div>
<div style="left:1579px;top:1322px;font:20px/22px 'Liberation Sans', sans-serif;color:#fcfcfc;white-space:pre;letter-spacing:-0.2px">分组: 34391 · Displayed: 340 (1.0%)</div>
<div style="left:2105px;top:1322px;font:20px/22px 'Liberation Sans', sans-serif;color:#fcfcfc;white-space:pre;">配置:</div>
<div style="left:2165.5px;top:1322px;font:20.5px/22px 'Liberation Sans', sans-serif;color:#fcfcfc;white-space:pre;">Default</div>
</body></html>
